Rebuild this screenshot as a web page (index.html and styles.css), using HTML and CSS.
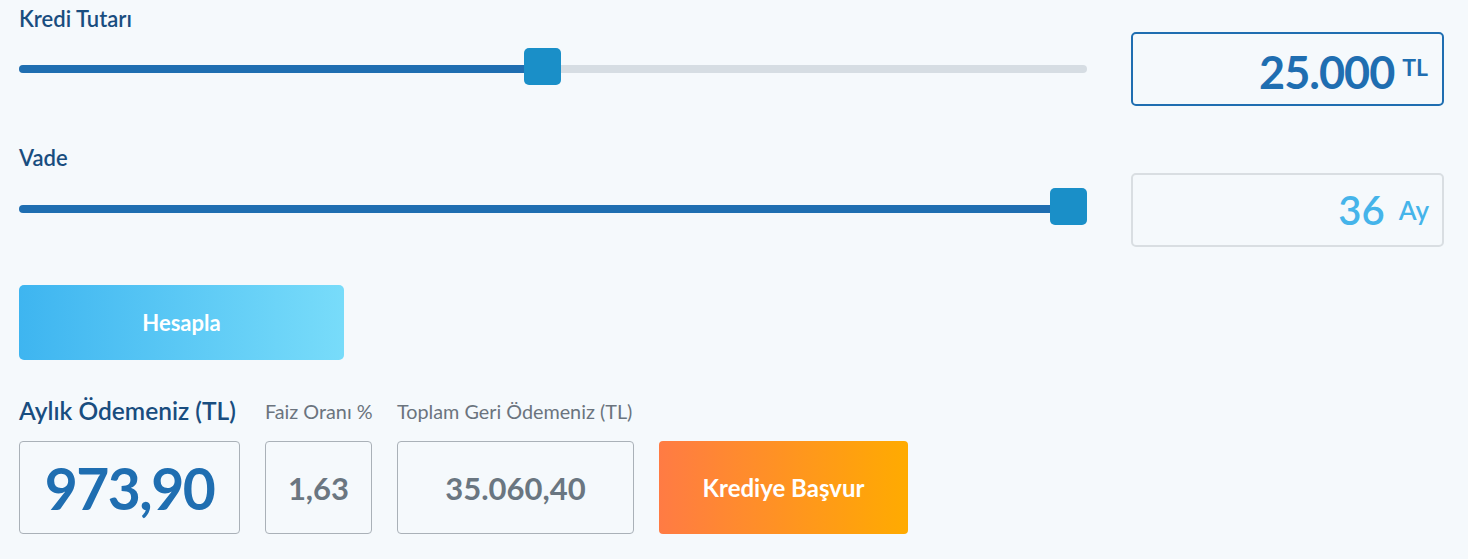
FILE: index.html
```html
<!DOCTYPE html>
<html lang="tr">
<head>
  <meta charset="UTF-8" />
  <meta name="viewport" content="width=device-width, initial-scale=1.0"/>
  <title>Kredi Hesaplama</title>
  <link rel="stylesheet" href="styles.css">
</head>
<body>
  <div class="calc">
    <div class="row row-amount">
      <div class="field">
        <div class="field-label">Kredi Tutarı</div>
        <div class="slider">
          <div class="track"><div class="fill" style="width: 49%"></div></div>
          <div class="thumb" style="left: calc((100% - 37px) * 0.49)"></div>
        </div>
      </div>
      <div class="amount amount-active">
        <span class="amount-value">25.000</span>
        <span class="amount-unit">TL</span>
      </div>
    </div>

    <div class="row row-term">
      <div class="field">
        <div class="field-label">Vade</div>
        <div class="slider">
          <div class="track"><div class="fill" style="width: 100%"></div></div>
          <div class="thumb" style="left: calc(100% - 37px)"></div>
        </div>
      </div>
      <div class="amount amount-term">
        <span class="term-value">36</span>
        <span class="term-unit">Ay</span>
      </div>
    </div>

    <button class="btn-calc">Hesapla</button>

    <div class="results">
      <div class="result result-main">
        <div class="result-label">Aylık Ödemeniz (TL)</div>
        <div class="result-box">973,90</div>
      </div>
      <div class="result result-rate">
        <div class="result-label muted">Faiz Oranı %</div>
        <div class="result-box">1,63</div>
      </div>
      <div class="result result-total">
        <div class="result-label muted">Toplam Geri Ödemeniz (TL)</div>
        <div class="result-box">35.060,40</div>
      </div>
      <button class="btn-apply">Krediye Başvur</button>
    </div>
  </div>
</body>
</html>
```

FILE: styles.css
```css
* {
  margin: 0;
  padding: 0;
  box-sizing: border-box;
  font-family: Lato, "Open Sans", sans-serif;
}

html, body {
  width: 100%;
  height: 100%;
  background: #f5f9fc;
  overflow: hidden;
}

.calc {
  padding: 0 24px 0 19px;
}

.row {
  display: flex;
  align-items: flex-start;
  gap: 44px;
}

.row-term {
  margin-top: 33px;
}

.field {
  flex: 1;
}

.field-label {
  margin-top: 5px;
  font-size: 22px;
  line-height: 28px;
  font-weight: 600;
  color: #194d7f;
}

.slider {
  position: relative;
  height: 37px;
  margin-top: 15px;
  padding-top: 17px;
}

.row-term .slider {
  margin-top: 16px;
}

.track {
  height: 8px;
  border-radius: 4px;
  background: #d6dde3;
  overflow: hidden;
}

.fill {
  height: 100%;
  background: #1f6eb1;
}

.thumb {
  position: absolute;
  top: 0;
  width: 37px;
  height: 37px;
  border-radius: 5px;
  background: #1a8fc8;
}

.amount {
  width: 313px;
  height: 74px;
  border-radius: 5px;
  display: flex;
  justify-content: flex-end;
  align-items: center;
}

.amount-active {
  margin-top: 32px;
  border: 2px solid #1f6eb1;
  padding: 6px 14px 0 0;
  gap: 8px;
}

.amount-value {
  font-size: 45px;
  font-weight: 700;
  color: #1f6eb1;
  letter-spacing: -1px;
}

.amount-unit {
  align-self: flex-start;
  margin-top: 13px;
  font-size: 23px;
  font-weight: 700;
  color: #1f6eb1;
}

.amount-term {
  margin-top: 34px;
  border: 2px solid #d9dee2;
  padding-right: 13px;
  gap: 14px;
}

.term-value {
  font-size: 40px;
  font-weight: 600;
  color: #45b4ea;
}

.term-unit {
  font-size: 26px;
  font-weight: 600;
  color: #45b4ea;
}

button {
  border: none;
  cursor: pointer;
  color: white;
  font-weight: 700;
}

.btn-calc {
  display: block;
  margin-top: 38px;
  width: 325px;
  height: 75px;
  border-radius: 5px;
  font-size: 22px;
  background: linear-gradient(to right, #3eb5f0, #78dcfa);
}

.results {
  display: flex;
  align-items: flex-end;
  gap: 25px;
  margin-top: 36px;
}

.result {
  flex: none;
}

.result-label {
  margin-bottom: 15px;
  font-size: 24.5px;
  line-height: 30px;
  font-weight: 600;
  color: #194d7f;
  white-space: nowrap;
}

.result-label.muted {
  margin-bottom: 17px;
  font-size: 19.8px;
  line-height: 26px;
  font-weight: 400;
  color: #6b747e;
}

.result-box {
  height: 93px;
  border: 1px solid #aab1b8;
  border-radius: 4px;
  display: flex;
  align-items: center;
  justify-content: center;
  font-weight: 700;
  font-size: 31px;
  color: #6a7681;
}

.result-main {
  width: 221px;
}

.result-main .result-box {
  font-size: 57px;
  letter-spacing: -1.5px;
  color: #1f6eb1;
}

.result-rate {
  width: 107px;
}

.result-total {
  width: 237px;
}

.btn-apply {
  width: 249px;
  height: 93px;
  border-radius: 4px;
  font-size: 24px;
  background: linear-gradient(to right, #ff7b44, #ffab00);
}
```
